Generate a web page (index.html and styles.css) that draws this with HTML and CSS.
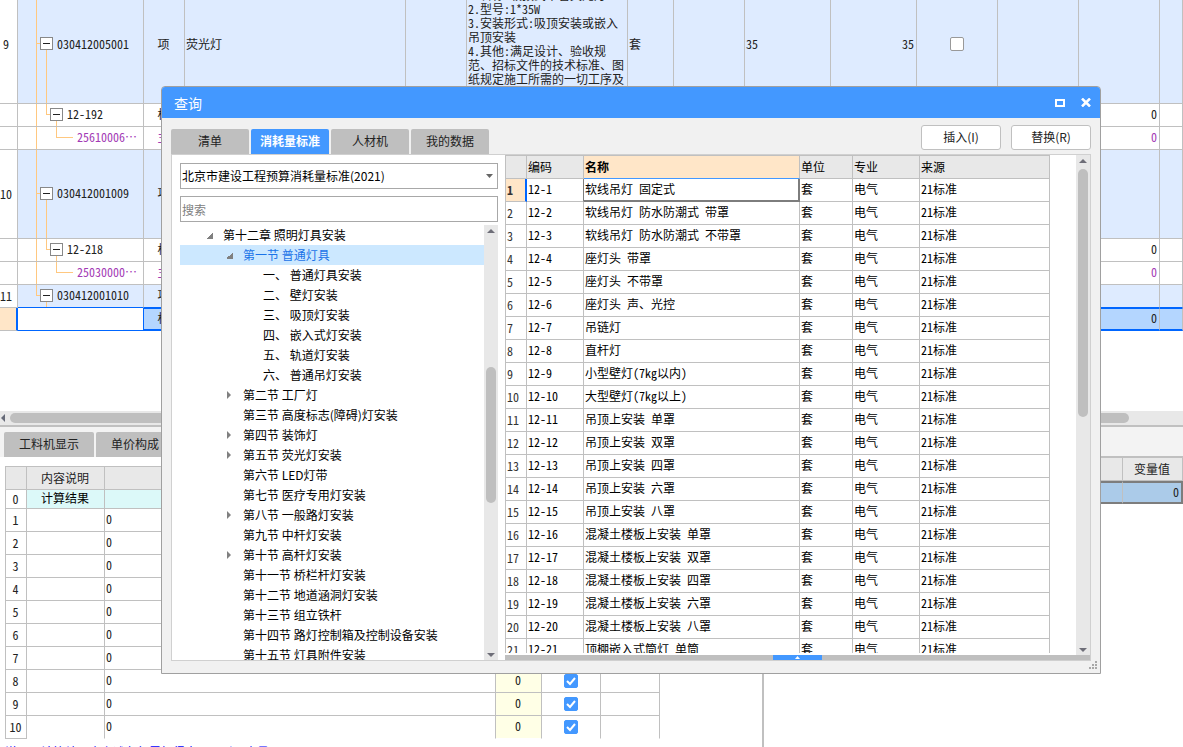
FILE: index.html
```html
<!DOCTYPE html>
<html lang="zh-CN">
<head>
<meta charset="utf-8">
<title>查询</title>
<link rel="stylesheet" href="styles.css">
</head>
<body>
<div class="app">
  <section class="bill-pane">
    <table class="grid bill">
      <colgroup><col class="w18"><col class="w126"><col class="w41"><col class="w221"><col class="w61"><col class="w161"><col class="w46"><col class="w71"><col class="w86"><col class="w86"><col class="w81"><col class="w81"><col class="w81"><col></colgroup>
      <tbody>
      <tr class="item tall-1"><th scope="row">9</th><td class="tree-cell"><i class="line trunk"></i><i class="line branch"></i><i class="line child down"></i><button class="toggle lv1" aria-label="折叠"></button><span class="code lv1">030412005001</span></td><td class="mid">项</td><td>荧光灯</td><td></td><td class="desc">1.名称:吸顶式单管荧光灯<br>2.型号:1*35W<br>3.安装形式:吸顶安装或嵌入<br>吊顶安装<br>4.其他:满足设计、验收规<br>范、招标文件的技术标准、图<br>纸规定施工所需的一切工序及<br>内容</td><td>套</td><td></td><td>35</td><td class="num">35</td><td class="mid"><input type="checkbox" class="check" aria-label="锁定综合单价"></td><td></td><td></td><td></td></tr>
      <tr><th scope="row"></th><td class="tree-cell"><i class="line trunk"></i><i class="line child up"></i><i class="line child-branch"></i><i class="line leaf down"></i><button class="toggle lv2" aria-label="折叠"></button><span class="code lv2">12-192</span></td><td class="mid">标</td><td></td><td></td><td></td><td></td><td></td><td></td><td></td><td></td><td></td><td class="num">0</td><td></td></tr>
      <tr class="material"><th scope="row"></th><td class="tree-cell"><i class="line trunk"></i><i class="line leaf up"></i><i class="line leaf-branch"></i><span class="code lv3">25610006⋯</span></td><td class="mid">主</td><td></td><td></td><td></td><td></td><td></td><td></td><td></td><td></td><td></td><td class="num">0</td><td></td></tr>
      <tr class="item tall-2"><th scope="row">10</th><td class="tree-cell"><i class="line trunk"></i><i class="line branch"></i><i class="line child down"></i><button class="toggle lv1" aria-label="折叠"></button><span class="code lv1">030412001009</span></td><td class="mid">项</td><td></td><td></td><td></td><td></td><td></td><td></td><td></td><td></td><td></td><td></td><td></td></tr>
      <tr><th scope="row"></th><td class="tree-cell"><i class="line trunk"></i><i class="line child up"></i><i class="line child-branch"></i><i class="line leaf down"></i><button class="toggle lv2" aria-label="折叠"></button><span class="code lv2">12-218</span></td><td class="mid">标</td><td></td><td></td><td></td><td></td><td></td><td></td><td></td><td></td><td></td><td class="num">0</td><td></td></tr>
      <tr class="material"><th scope="row"></th><td class="tree-cell"><i class="line trunk"></i><i class="line leaf up"></i><i class="line leaf-branch"></i><span class="code lv3">25030000⋯</span></td><td class="mid">主</td><td></td><td></td><td></td><td></td><td></td><td></td><td></td><td></td><td></td><td class="num">0</td><td></td></tr>
      <tr class="item before-current"><th scope="row">11</th><td class="tree-cell"><i class="line trunk up"></i><i class="line branch"></i><i class="line child down"></i><button class="toggle lv1" aria-label="折叠"></button><span class="code lv1">030412001010</span></td><td class="mid">项</td><td></td><td></td><td></td><td></td><td></td><td></td><td></td><td></td><td></td><td></td><td></td></tr>
      <tr class="current"><th scope="row"></th><td class="editing"></td><td class="mid">标</td><td></td><td></td><td></td><td></td><td></td><td></td><td></td><td></td><td></td><td class="num">0</td><td></td></tr>
      </tbody>
    </table>
  </section>
  <div class="h-scroll"><svg class="arrow-left" viewBox="0 0 4 8" aria-hidden="true"><path d="M4 0v8L0 4z"/></svg><div class="h-thumb"></div></div>

  <section class="detail">
    <div class="detail-left">
      <div class="strip"><button class="dtab">工料机显示</button><button class="dtab">单价构成</button></div>
      <table class="grid calc">
        <colgroup><col class="w21"><col class="w78"><col class="w391"><col class="w46"><col class="w59"><col class="w59"></colgroup>
        <thead><tr><th></th><th>内容说明</th><th></th><th></th><th></th><th></th></tr></thead>
        <tbody>
        <tr class="total"><th scope="row">0</th><td>计算结果</td><td></td><td></td><td></td><td></td></tr>
        <tr><th scope="row">1</th><td></td><td>0</td><td class="result"></td><td></td><td></td></tr>
        <tr><th scope="row">2</th><td></td><td>0</td><td class="result"></td><td></td><td></td></tr>
        <tr><th scope="row">3</th><td></td><td>0</td><td class="result"></td><td></td><td></td></tr>
        <tr><th scope="row">4</th><td></td><td>0</td><td class="result"></td><td></td><td></td></tr>
        <tr><th scope="row">5</th><td></td><td>0</td><td class="result"></td><td></td><td></td></tr>
        <tr><th scope="row">6</th><td></td><td>0</td><td class="result"></td><td></td><td></td></tr>
        <tr><th scope="row">7</th><td></td><td>0</td><td class="result"></td><td></td><td></td></tr>
        <tr><th scope="row">8</th><td></td><td>0</td><td class="result">0</td><td class="mid"><input type="checkbox" class="check" checked aria-label="累加"></td><td></td></tr>
        <tr><th scope="row">9</th><td></td><td>0</td><td class="result">0</td><td class="mid"><input type="checkbox" class="check" checked aria-label="累加"></td><td></td></tr>
        <tr><th scope="row">10</th><td></td><td>0</td><td class="result">0</td><td class="mid"><input type="checkbox" class="check" checked aria-label="累加"></td><td></td></tr>
        </tbody>
      </table>
      <p class="hint">说明：计算结果由上述各行累加得出，可引用变量</p>
    </div>
    <div class="detail-right">
      <div class="strip"></div>
      <table class="grid vars">
        <colgroup><col><col class="w60"></colgroup>
        <thead><tr><th></th><th>变量值</th></tr></thead>
        <tbody><tr><td></td><td class="num">0</td></tr></tbody>
      </table>
    </div>
  </section>

  <div class="dialog" role="dialog" aria-labelledby="dlg-title">
    <header class="titlebar">
      <h1 id="dlg-title">查询</h1>
      <button class="win-btn" aria-label="最大化"><svg width="10" height="8" viewBox="0 0 10 8"><path d="M1 1h8v6H1z" fill="none" stroke="#fff" stroke-width="2"/></svg></button>
      <button class="win-btn" aria-label="关闭"><svg width="10" height="9" viewBox="0 0 10 9"><path d="M1 .5l8 8M9 .5l-8 8" fill="none" stroke="#fff" stroke-width="2.500"/></svg></button>
    </header>
    <div class="toolbar">
      <nav class="tabs"><button class="tab">清单</button><button class="tab active">消耗量标准</button><button class="tab">人材机</button><button class="tab">我的数据</button></nav>
      <div class="actions"><button class="btn">插入(I)</button><button class="btn">替换(R)</button></div>
    </div>
    <div class="panel">
      <aside class="chapters">
        <div class="select-wrap"><select class="field" aria-label="标准"><option>北京市建设工程预算消耗量标准(2021)</option></select><svg width="7" height="4" viewBox="0 0 7 4" aria-hidden="true"><path d="M0 0h7L3.500 4z"/></svg></div>
        <input class="field search" type="text" placeholder="搜索" aria-label="搜索">
        <div class="tree-box">
          <ul class="tree">
            <li class="t1 open">第十二章 照明灯具安装</li>
            <li class="t2 open picked">第一节 普通灯具</li>
            <li class="t3">一、 普通灯具安装</li>
            <li class="t3">二、 壁灯安装</li>
            <li class="t3">三、 吸顶灯安装</li>
            <li class="t3">四、 嵌入式灯安装</li>
            <li class="t3">五、 轨道灯安装</li>
            <li class="t3">六、 普通吊灯安装</li>
            <li class="t2 shut">第二节 工厂灯</li>
            <li class="t2">第三节 高度标志(障碍)灯安装</li>
            <li class="t2 shut">第四节 装饰灯</li>
            <li class="t2 shut">第五节 荧光灯安装</li>
            <li class="t2">第六节 LED灯带</li>
            <li class="t2">第七节 医疗专用灯安装</li>
            <li class="t2 shut">第八节 一般路灯安装</li>
            <li class="t2">第九节 中杆灯安装</li>
            <li class="t2 shut">第十节 高杆灯安装</li>
            <li class="t2">第十一节 桥栏杆灯安装</li>
            <li class="t2">第十二节 地道涵洞灯安装</li>
            <li class="t2">第十三节 组立铁杆</li>
            <li class="t2">第十四节 路灯控制箱及控制设备安装</li>
            <li class="t2">第十五节 灯具附件安装</li>
          </ul>
          <div class="v-scroll"><svg viewBox="0 0 8 4" aria-hidden="true"><path d="M0 4h8L4 0z"/></svg><div class="track"><div class="thumb thumb-tree"></div></div><svg viewBox="0 0 8 4" aria-hidden="true"><path d="M0 0h8L4 4z"/></svg></div>
        </div>
      </aside>
      <div class="quota-pane">
        <div class="quota-view">
          <div class="quota-clip">
          <table class="grid quota">
            <colgroup><col class="w21"><col class="w57"><col class="w216"><col class="w53"><col class="w67"><col></colgroup>
            <thead><tr><th></th><th>编码</th><th class="key">名称</th><th>单位</th><th>专业</th><th>来源</th></tr></thead>
            <tbody>
            <tr class="focus"><th scope="row">1</th><td>12-1</td><td>软线吊灯 固定式</td><td>套</td><td>电气</td><td>21标准</td></tr>
            <tr><th scope="row">2</th><td>12-2</td><td>软线吊灯 防水防潮式 带罩</td><td>套</td><td>电气</td><td>21标准</td></tr>
            <tr><th scope="row">3</th><td>12-3</td><td>软线吊灯 防水防潮式 不带罩</td><td>套</td><td>电气</td><td>21标准</td></tr>
            <tr><th scope="row">4</th><td>12-4</td><td>座灯头 带罩</td><td>套</td><td>电气</td><td>21标准</td></tr>
            <tr><th scope="row">5</th><td>12-5</td><td>座灯头 不带罩</td><td>套</td><td>电气</td><td>21标准</td></tr>
            <tr><th scope="row">6</th><td>12-6</td><td>座灯头 声、光控</td><td>套</td><td>电气</td><td>21标准</td></tr>
            <tr><th scope="row">7</th><td>12-7</td><td>吊链灯</td><td>套</td><td>电气</td><td>21标准</td></tr>
            <tr><th scope="row">8</th><td>12-8</td><td>直杆灯</td><td>套</td><td>电气</td><td>21标准</td></tr>
            <tr><th scope="row">9</th><td>12-9</td><td>小型壁灯(7kg以内)</td><td>套</td><td>电气</td><td>21标准</td></tr>
            <tr><th scope="row">10</th><td>12-10</td><td>大型壁灯(7kg以上)</td><td>套</td><td>电气</td><td>21标准</td></tr>
            <tr><th scope="row">11</th><td>12-11</td><td>吊顶上安装 单罩</td><td>套</td><td>电气</td><td>21标准</td></tr>
            <tr><th scope="row">12</th><td>12-12</td><td>吊顶上安装 双罩</td><td>套</td><td>电气</td><td>21标准</td></tr>
            <tr><th scope="row">13</th><td>12-13</td><td>吊顶上安装 四罩</td><td>套</td><td>电气</td><td>21标准</td></tr>
            <tr><th scope="row">14</th><td>12-14</td><td>吊顶上安装 六罩</td><td>套</td><td>电气</td><td>21标准</td></tr>
            <tr><th scope="row">15</th><td>12-15</td><td>吊顶上安装 八罩</td><td>套</td><td>电气</td><td>21标准</td></tr>
            <tr><th scope="row">16</th><td>12-16</td><td>混凝土楼板上安装 单罩</td><td>套</td><td>电气</td><td>21标准</td></tr>
            <tr><th scope="row">17</th><td>12-17</td><td>混凝土楼板上安装 双罩</td><td>套</td><td>电气</td><td>21标准</td></tr>
            <tr><th scope="row">18</th><td>12-18</td><td>混凝土楼板上安装 四罩</td><td>套</td><td>电气</td><td>21标准</td></tr>
            <tr><th scope="row">19</th><td>12-19</td><td>混凝土楼板上安装 六罩</td><td>套</td><td>电气</td><td>21标准</td></tr>
            <tr><th scope="row">20</th><td>12-20</td><td>混凝土楼板上安装 八罩</td><td>套</td><td>电气</td><td>21标准</td></tr>
            <tr><th scope="row">21</th><td>12-21</td><td>顶棚嵌入式筒灯 单筒</td><td>套</td><td>电气</td><td>21标准</td></tr>
            </tbody>
          </table>
          </div>
          <div class="v-scroll"><svg viewBox="0 0 8 4" aria-hidden="true"><path d="M0 4h8L4 0z"/></svg><div class="track"><div class="thumb thumb-quota"></div></div><svg viewBox="0 0 8 4" aria-hidden="true"><path d="M0 0h8L4 4z"/></svg></div>
        </div>
        <div class="splitter"><button aria-label="展开"><svg width="5" height="3" viewBox="0 0 5 3"><path d="M0 3h5L2.500 0z" fill="#fff"/></svg></button></div>
      </div>
    </div>
    <svg class="grip" width="8" height="8" viewBox="0 0 8 8" aria-hidden="true"><path d="M6 0h2v2H6zM3 3h2v2H3zM6 3h2v2H6zM0 6h2v2H0zM3 6h2v2H3zM6 6h2v2H6z"/></svg>
  </div>
</div>
</body>
</html>
```
FILE: styles.css
```css
* { box-sizing: border-box; }
body {
  margin: 0;
  background: #fff;
  color: #222;
  font: 12px/14px "Noto Sans Mono CJK SC", "Noto Sans CJK SC", sans-serif;
}
button, input, select { font: inherit; color: inherit; margin: 0; }
button { padding: 0; border: 0; background: none; }
.app { position: relative; height: 100vh; overflow: hidden; display: flex; flex-direction: column; }

/* shared grid look */
.grid { border-collapse: separate; border-spacing: 0; table-layout: fixed; width: 100%; }
.grid th, .grid td {
  height: 23px; padding: 0 2px 0 1px; overflow: hidden; white-space: nowrap;
  border-right: 1px solid #c0c0c0; border-bottom: 1px solid #c0c0c0;
  font-weight: normal; text-align: left; vertical-align: middle;
}
.grid td { padding-bottom: 2px; }
.grid .mid { text-align: center; }
.grid .num { text-align: right; }
.w18 { width: 18px; } .w21 { width: 21px; } .w41 { width: 41px; } .w46 { width: 46px; }
.w53 { width: 53px; } .w57 { width: 57px; } .w59 { width: 59px; } .w60 { width: 60px; }
.w61 { width: 61px; } .w67 { width: 67px; } .w71 { width: 71px; } .w78 { width: 78px; }
.w81 { width: 81px; } .w86 { width: 86px; } .w126 { width: 126px; } .w161 { width: 161px; }
.w216 { width: 216px; } .w221 { width: 221px; } .w391 { width: 391px; }

.check {
  appearance: none; display: block; width: 14px; height: 14px; margin: 0 auto;
  border: 1px solid #999; border-radius: 2px; background: #fff;
}
.check:checked {
  border-color: #4398ff;
  background: #4398ff url("data:image/svg+xml,%3Csvg xmlns='http://www.w3.org/2000/svg' viewBox='0 0 12 12'%3E%3Cpath d='M2 6l3 3 5-6' fill='none' stroke='white' stroke-width='2'/%3E%3C/svg%3E") center / 12px no-repeat;
}

/* bill of quantities */
.bill-pane { flex: none; height: 411px; overflow: hidden; }
.bill { margin-top: -15px; }
.bill th { padding: 0 5px 0 0; text-align: center; }
.bill .item td { background: #deebff; }
.bill .tall-1 td, .bill .tall-1 th { height: 119px; padding-bottom: 0; }
.bill .tall-2 td, .bill .tall-2 th { height: 89px; }
.bill .material { color: #a33ab5; }
.bill .tree-cell { position: relative; padding: 0 0 2px; }
.code { display: block; }
.code.lv1 { padding-left: 39px; }
.code.lv2 { padding-left: 49px; }
.code.lv3 { padding-left: 59px; }
.line { position: absolute; background: #ffc880; }
.trunk { left: 18px; top: 0; bottom: -1px; width: 1px; z-index: 1; }
.branch { left: 18px; top: calc(50% - 1px); width: 5px; height: 1px; }
.child { left: 28px; top: 0; bottom: 0; width: 1px; }
.child-branch { left: 28px; top: calc(50% - 1px); width: 5px; height: 1px; }
.leaf { left: 38px; top: 0; bottom: 0; width: 1px; }
.leaf-branch { left: 38px; top: calc(50% - 1px); width: 17px; height: 1px; }
.line.up { bottom: 50%; }
.line.down { top: 50%; }
.toggle {
  position: absolute; top: 50%; width: 13px; height: 13px; margin-top: -7px;
  border: 1px solid #888; z-index: 2;
  background: linear-gradient(#222, #222) center / 7px 1px no-repeat, #fff;
}
.toggle.lv1 { left: 22px; }
.toggle.lv2 { left: 32px; }
.bill .before-current td { border-bottom-color: #0066ff; }
.bill .current th { background: #ffe6c8; border-right: 2px solid #0066ff; }
.bill .current td { background: #b4d6ff; border-bottom: 2px solid #0066ff; border-top: 1px solid #0066ff; }
.bill .current .editing { background: #fff; border-right-color: #0066ff; border-bottom-width: 1px; border-top-width: 0; }

.h-scroll { flex: none; display: flex; align-items: center; height: 14px; background: #e8e8e8; }
.arrow-left { width: 4px; height: 8px; margin: 0 5px 0 1px; fill: #666a78; }
.h-thumb { height: 10px; flex: 1; margin-right: 54px; border-radius: 5px; background: #bfbfbf; }

/* lower detail area */
.detail { flex: 1; min-height: 0; display: flex; border-top: 2px solid #c0c0c0; }
.detail-left { flex: 0 0 764px; border-right: 2px solid #c0c0c0; overflow: hidden; }
.detail-right { flex: 1; min-width: 0; }
.strip { display: flex; align-items: flex-end; gap: 2px; height: 30px; padding-left: 4px; background: #f3f3f3; }
.detail-right .strip { height: 29px; }
.dtab { height: 25px; width: 90px; padding-bottom: 2px; background: #bfbfbf; border-radius: 2px 2px 0 0; color: #222; font-family: "Noto Sans CJK SC", sans-serif; }
.dtab + .dtab { width: 78px; }
.calc { width: 655px; margin: 9px 0 0 5px; border-left: 1px solid #c0c0c0; border-top: 1px solid #c0c0c0; }
.calc thead th { background: #e8e8e8; text-align: center; }
.calc th { text-align: center; }
.calc .total th, .calc .total td { height: 19px; }
.calc .total td { background: #dcf9f9; text-align: center; color: #000; }
.calc .result { background: #ffffe6; text-align: center; }
.calc .mid { padding-bottom: 0; }
.calc tbody tr:last-child td { border-bottom-color: #fff; }
.hint { margin: 6px 0 0 5px; color: #00f; white-space: nowrap; }
.vars { border-top: 2px solid #c0c0c0; }
.vars th { background: #e8e8e8; text-align: center; }
.vars td { background: #abcbe9; border-top: 2px solid #7d7d7d; border-bottom: 2px solid #7d7d7d; }
.vars td:last-child { border-right: 2px solid #7d7d7d; }

/* lookup dialog, floating over the workspace */
.dialog {
  position: absolute; left: 161px; right: 82px; top: 86px; bottom: 73px; z-index: 10;
  display: flex; flex-direction: column;
  border: 1px solid #a0a0a0; border-radius: 4px 4px 0 0; background: #f1f1f1; overflow: hidden;
  font-family: "Noto Sans CJK SC", sans-serif;
}
.titlebar { flex: none; display: flex; align-items: center; gap: 16px; height: 31px; padding: 0 9px 0 12px; background: #4398ff; color: #fff; }
.titlebar h1 { flex: 1; margin: 0; font-size: 14px; line-height: 20px; font-weight: normal; }
.win-btn { display: flex; }
.toolbar { flex: none; display: flex; justify-content: space-between; align-items: flex-end; height: 36px; padding: 0 9px; }
.tabs { display: flex; gap: 2px; }
.tab { width: 78px; height: 25px; padding-bottom: 2px; background: #bfbfbf; border-radius: 2px 2px 0 0; color: #222; }
.tab.active { background: #4398ff; color: #fff; font-weight: bold; }
.actions { display: flex; gap: 10px; padding-bottom: 4px; }
.btn { width: 80px; height: 25px; padding-bottom: 2px; border: 1px solid #c0c0c0; border-radius: 3px; background: #fff; color: #222; }
.panel { flex: 1; min-height: 0; display: flex; margin: 0 9px 12px; border: 1px solid #d0d0d0; background: #fff; }

.chapters { flex: 0 0 333px; display: flex; flex-direction: column; padding: 8px 7px 0 8px; color: #000; }
.field { display: block; width: 100%; height: 26px; padding: 0 1px; border: 1px solid #a8a8a8; border-radius: 0; background: #fff; appearance: none; outline: 0; }
.select-wrap { position: relative; margin-bottom: 7px; }
.select-wrap svg { position: absolute; right: 5px; top: 11px; fill: #666; }
.search::placeholder { color: #808080; opacity: 1; }
.tree-box { flex: 1; min-height: 0; display: flex; margin-top: 3px; }
.tree { flex: 1; margin: 0; padding: 0; list-style: none; overflow: hidden; }
.tree li { display: flex; align-items: center; height: 20px; white-space: pre; }
.tree li::before { content: ""; width: 19px; height: 8px; flex: none; }
.t1 { padding-left: 24px; }
.t2 { padding-left: 44px; }
.t3 { padding-left: 64px; }
.tree .open::before { background: linear-gradient(135deg, transparent 50%, #808080 50%) 2px 1px / 7px 7px no-repeat; }
.tree .shut::before { width: 0; height: 0; margin: 0 12px 0 3px; border: 4px solid transparent; border-left: 4px solid #808080; border-right: 0; }
.tree .picked { background: #cce8ff; color: #1a73e8; }

.v-scroll { flex: 0 0 14px; display: flex; flex-direction: column; align-items: center; padding: 4px 0 3px; background: #e8e8e8; }
.v-scroll svg { flex: none; width: 8px; height: 4px; fill: #6e6e78; }
.track { flex: 1; width: 10px; padding: 6px 0; }
.thumb { border-radius: 5px; background: #bfbfbf; }
.thumb-tree { height: 136px; margin-top: 128px; }
.thumb-quota { height: 248px; }

.quota-pane { flex: 1; min-width: 0; display: flex; flex-direction: column; color: #000; }
.quota-view { flex: 1; min-height: 0; display: flex; }
.quota-clip { flex: 1; min-width: 0; margin-bottom: 2px; overflow: hidden; }
.quota { width: calc(100% - 26px); border-left: 1px solid #c0c0c0; border-top: 1px solid #c0c0c0; font-family: "Noto Sans Mono CJK SC", "Noto Sans CJK SC", sans-serif; }
.quota thead th { background: #e8e8e8; }
.quota thead .key { background: #ffe6c8; border-bottom-color: #4398ff; font-weight: bold; }
.quota tbody th { color: #333; }
.quota .focus th { background: #ffe6c8; border-right: 2px solid #0066ff; font-weight: bold; }
.quota .focus td:nth-child(2) { border-right-color: #7d7d7d; }
.quota .focus td:nth-child(3) { border-color: #7d7d7d; box-shadow: inset -1px -1px 0 #7d7d7d; }
.splitter { flex: none; display: flex; justify-content: center; height: 5px; background: #bfbfbf; }
.splitter button { display: flex; justify-content: center; align-items: center; width: 49px; height: 5px; background: #4398ff; }
.grip { position: absolute; right: 3px; bottom: 4px; fill: #a8a8a8; }
```
